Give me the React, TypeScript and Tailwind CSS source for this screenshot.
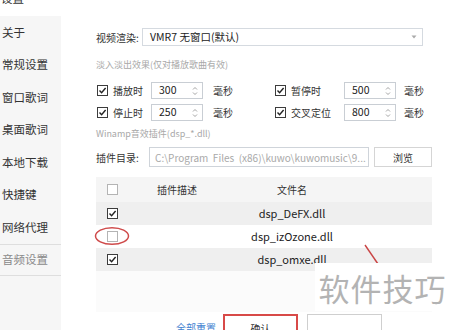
import React from 'react';

const menu = ['关于', '常规设置', '窗口歌词', '桌面歌词', '本地下载', '快捷键', '网络代理'];

const files = [
  { name: 'dsp_DeFX.dll', on: true },
  { name: 'dsp_izOzone.dll', on: false },
  { name: 'dsp_omxe.dll', on: true },
];

function Box({ checked, light = false }: { checked: boolean; light?: boolean }) {
  return (
    <span
      className={`flex h-[11px] w-[11px] shrink-0 items-center justify-center border bg-white ${
        checked ? 'border-[#3c3c3c]' : light ? 'border-[#b4b4b4]' : 'border-[#9a9a9a]'
      }`}
    >
      {checked && (
        <svg width="9" height="9" viewBox="0 0 9 9">
          <path d="M1.5 4.6 L3.6 6.8 L7.6 2" fill="none" stroke="#222" strokeWidth="1.4" />
        </svg>
      )}
    </span>
  );
}

function Spin({ value }: { value: string }) {
  return (
    <div className="flex h-[17px] w-[52px] items-center justify-between border border-[#c9ced4] bg-white pl-[7px] pr-[4px]">
      <span className="text-[10.5px] leading-none text-[#222]">{value}</span>
      <svg width="6" height="10" viewBox="0 0 6 10">
        <path d="M1 3.5 L3 1.5 L5 3.5" fill="none" stroke="#999" strokeWidth="0.9" />
        <path d="M1 6.5 L3 8.5 L5 6.5" fill="none" stroke="#999" strokeWidth="0.9" />
      </svg>
    </div>
  );
}

function FadeRow({ left, right }: { left: [string, string, boolean]; right: [string, string, boolean] }) {
  return (
    <div className="flex items-center text-[10px] text-[#333]">
      <div className="flex w-[179px] items-center">
        <span className="ml-[1px]"><Box checked={left[2]} /></span>
        <span className="ml-[5px] w-[38px] whitespace-nowrap">{left[0]}</span>
        <Spin value={left[1]} />
        <span className="ml-[10px]">毫秒</span>
      </div>
      <Box checked={right[2]} />
      <span className="ml-[5px] w-[53px] whitespace-nowrap">{right[0]}</span>
      <Spin value={right[1]} />
      <span className="ml-[8px]">毫秒</span>
    </div>
  );
}

export default function App() {
  return (
    <div className="relative flex h-[330px] w-[450px] overflow-hidden bg-white font-['Noto_Sans_CJK_SC','Microsoft_YaHei',sans-serif]">
      {/* sidebar */}
      <div className="flex w-[61px] shrink-0 flex-col">
        <div className="h-[16px] overflow-hidden">
          <span className="-mt-[9px] block pl-[1px] text-[11.5px] leading-[14px] text-[#333]">设置</span>
        </div>
        <div className="flex flex-1 flex-col bg-[#f6f6f6]">
          {menu.map((m) => (
            <div key={m} className="flex h-[32.5px] items-center pl-[2px] text-[11.5px] text-[#333]">
              {m}
            </div>
          ))}
          <div className="flex h-[32.5px] items-center border-y border-[#dedede] pl-[2px] text-[11.5px] text-[#8a8a8a]">
            音频设置
          </div>
        </div>
      </div>

      {/* main */}
      <div className="flex flex-1 flex-col pl-[35px]">
        <div className="ml-[47px] mt-[17px] h-px w-[280px] bg-[#d5dae0]" />

        <div className="mt-[11px] flex h-[18px] items-center">
          <span className="w-[46px] whitespace-nowrap text-[10px] text-[#333]">视频渲染:</span>
          <div className="flex h-[18px] w-[281px] items-center justify-between border border-[#d5dae0] pl-[7px] pr-[5px]">
            <span className="whitespace-nowrap text-[10.5px] text-[#222]">VMR7 无窗口(默认)</span>
            <svg width="6" height="4" viewBox="0 0 6 4">
              <path d="M0.5 0.5 L3 3.5 L5.5 0.5 Z" fill="#aaa" />
            </svg>
          </div>
        </div>

        <div className="mt-[12px] whitespace-nowrap text-[9px] leading-[14px] text-[#a8a8a8]">淡入淡出效果(仅对播放歌曲有效)</div>

        <div className="mt-[10px]">
          <FadeRow left={['播放时', '300', true]} right={['暂停时', '500', true]} />
        </div>
        <div className="mt-[5px]">
          <FadeRow left={['停止时', '250', true]} right={['交叉定位', '800', true]} />
        </div>

        <div className="mt-[6px] whitespace-nowrap text-[9px] leading-[14px] text-[#a8a8a8]">Winamp音效插件(dsp_*.dll)</div>

        <div className="mt-[6px] flex h-[20px] items-center">
          <span className="w-[53px] whitespace-nowrap text-[10px] text-[#333]">插件目录:</span>
          <div className="flex h-[20px] w-[220px] items-center overflow-hidden border border-[#cfd4da] pl-[5px]">
            <span className="whitespace-pre text-[10px] text-[#a9a9a9]">C:\Program  Files  (x86)\kuwo\kuwomusic\9...</span>
          </div>
          <div className="ml-[5px] flex h-[20px] w-[58px] items-center justify-center border border-[#d5d5d5] text-[10px] text-[#333]">
            浏览
          </div>
        </div>

        {/* table */}
        <div className="mt-[10px] w-[336px] bg-[#fbfbfb]">
          <div className="grid h-[25px] grid-cols-[61px_63px_144px] items-center bg-[#f5f5f5] text-[10px] text-[#333]">
            <span className="pl-[11px]"><Box checked={false} light /></span>
            <span className="whitespace-nowrap">插件描述</span>
            <span className="text-center">文件名</span>
          </div>
          {files.map((f, i) => (
            <div
              key={f.name}
              className={`grid h-[23px] grid-cols-[61px_63px_144px] items-center ${i % 2 === 0 ? 'bg-[#efefef]' : 'bg-white'}`}
            >
              <span className="pl-[11px]"><Box checked={f.on} light /></span>
              <span />
              <span className="text-center text-[11px] text-[#222]">{f.name}</span>
            </div>
          ))}
          <div className="h-[41px]" />
        </div>

        {/* buttons */}
        <div className="mt-[2px] flex items-start">
          <span className="ml-[80px] mt-[6px] whitespace-nowrap text-[10px] text-[#3f7fd0]">全部重置</span>
          <div className="ml-[7px] flex h-[24px] w-[75px] justify-center border-2 border-[#d84a48] pt-[5px] text-[10px] text-[#333]">
            确认
          </div>
          <div className="ml-[9px] h-[24px] w-[75px] border border-[#cfcfcf]" />
        </div>
      </div>

      {/* annotation: red circle */}
      <svg className="absolute left-[94px] top-[226px]" width="36" height="20" viewBox="0 0 36 20">
        <ellipse cx="18" cy="10" rx="16.5" ry="8.3" fill="none" stroke="#cf4b4b" strokeWidth="1.5" />
      </svg>
      {/* annotation: red stroke */}
      <svg className="absolute left-[362px] top-[242px]" width="20" height="24" viewBox="0 0 20 24">
        <path d="M3 3 L16 22" stroke="#c94444" strokeWidth="1.4" />
      </svg>

      {/* watermark */}
      <div className="absolute left-[315px] top-[263px] flex h-[48px] w-[135px] items-center justify-center bg-white">
        <span className="text-[31px] leading-none tracking-[1px] text-[#b3b3b3]">软件技巧</span>
      </div>
    </div>
  );
}
